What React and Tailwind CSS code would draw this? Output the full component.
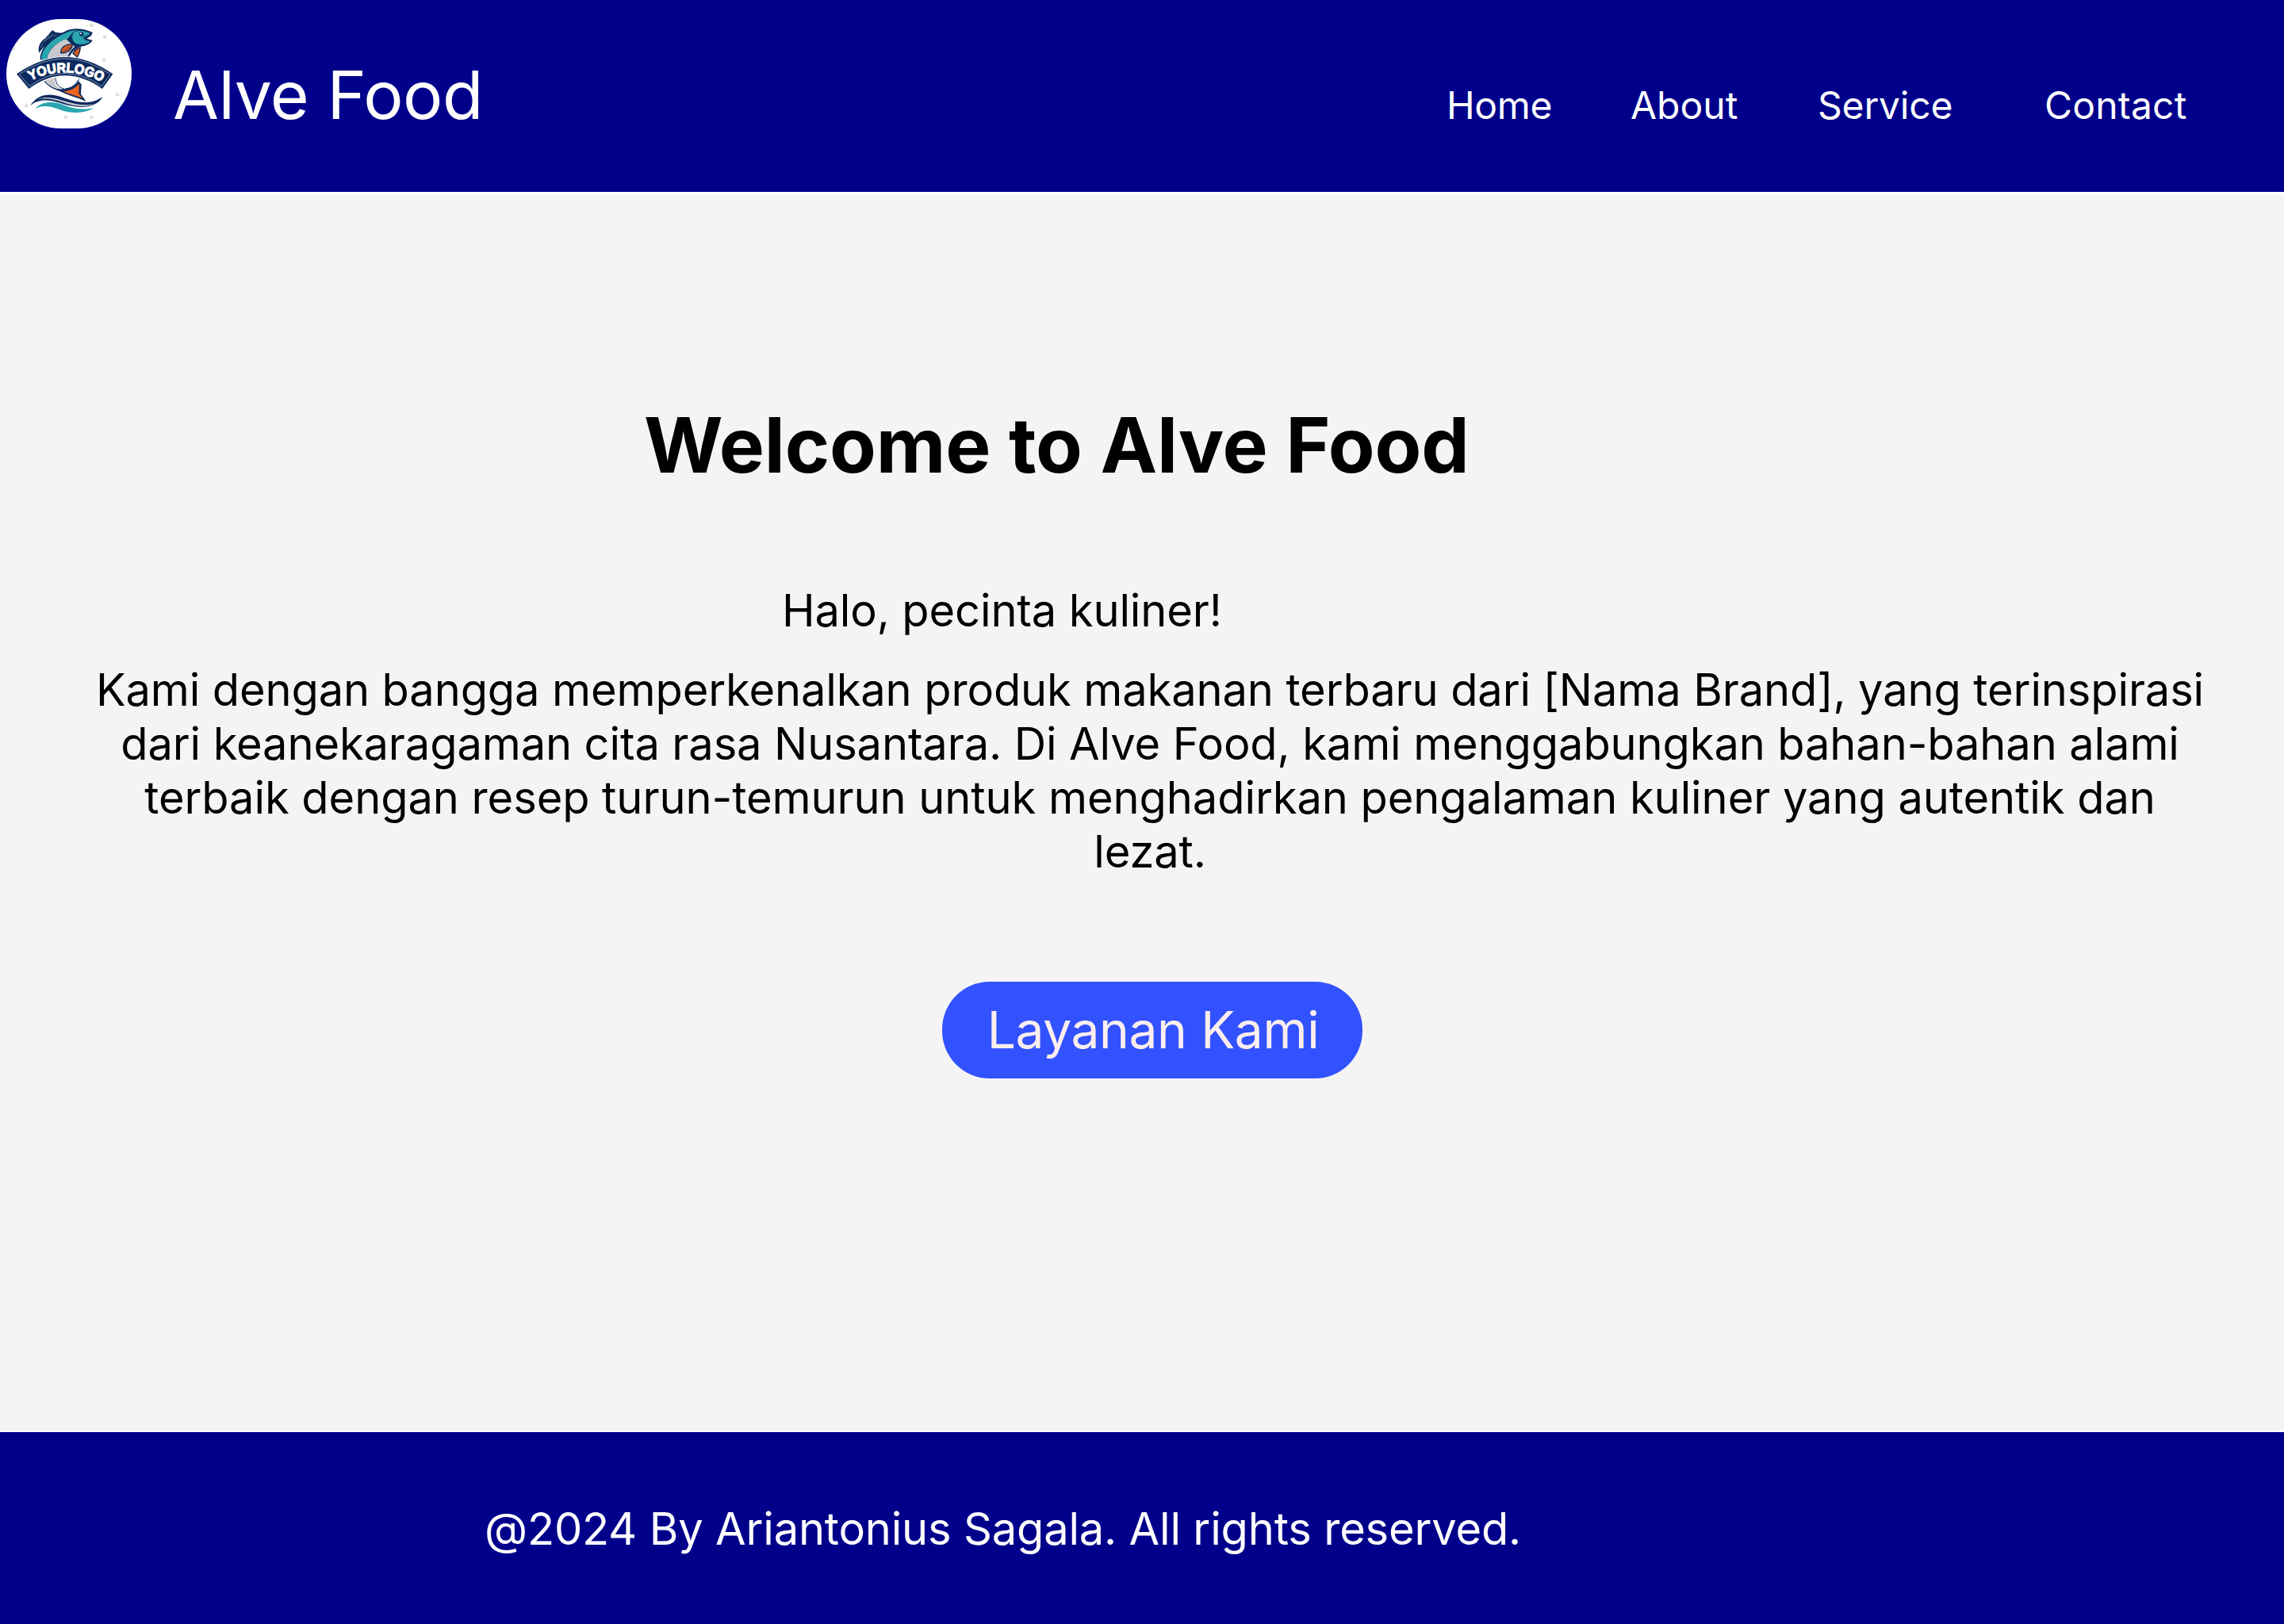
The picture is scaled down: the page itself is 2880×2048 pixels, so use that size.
function Logo() {
  return (
    <svg viewBox="24 42 474 414" className="mt-6 ml-2 h-[138px] w-[158px] shrink-0 rounded-[69px] bg-white">
      <g fill="#dedede">
        <path d="M340 60h12v12h-12zM390 104h12v12h-12zM388 191h12v12h-12zM438 322h12v12h-12zM243 407h12v12h-12zM340 407h12v12h-12zM94 364h12v12h-12zM46 150h10v12h-10z" />
      </g>
      <path d="M148 170C142 150 150 128 172 114L198 84L210 92L240 96L222 112C190 126 164 146 148 170Z" fill="#0b2a5e" />
      <path d="M154 152C160 130 180 112 214 101M166 126l8-12M180 116l6-14M194 108l4-12" fill="none" stroke="#5d6f93" strokeWidth="3" />
      <path d="M152 196C150 150 196 108 244 90C268 76 306 74 350 92L346 104L328 116L350 122C344 134 330 142 306 146C282 152 262 176 258 200Z" fill="#0b2a5e" />
      <path d="M156 194C156 154 200 114 248 95C272 81 308 80 344 95L338 103L316 114L324 126C316 136 290 140 276 126C268 112 270 100 278 90C262 104 262 118 244 122C204 134 182 160 178 196Z" fill="#2aa5b0" />
      <path d="M178 196C182 158 212 132 250 118C262 128 270 138 284 146C266 160 256 178 254 196Z" fill="#c9c9cd" />
      <path d="M276 94C268 112 272 130 292 138C314 142 334 136 344 126L322 120L314 110L340 100L342 95C314 82 288 82 276 94Z" fill="#2aa5b0" stroke="#0b2a5e" strokeWidth="3" />
      <circle cx="308" cy="99" r="8" fill="#0b2a5e" />
      <circle cx="306" cy="97" r="3" fill="#fff" />
      <path d="M230 168C232 146 250 136 274 138C272 158 256 172 230 170Z" fill="#d95b1a" stroke="#0b2a5e" strokeWidth="4" />
      <path d="M238 165L266 143M244 168L270 148" stroke="#0b2a5e" strokeWidth="1.5" />
      <path d="M276 172C284 158 294 152 304 150C302 164 300 176 292 186Z" fill="#d95b1a" stroke="#0b2a5e" strokeWidth="4" />
      <path d="M160 264C172 294 204 312 244 318L292 292L304 262L290 250H190Z" fill="#0b2a5e" />
      <path d="M166 268C178 292 204 306 236 310C262 308 286 296 300 270L280 255H180Z" fill="#fff" />
      <path d="M168 268C178 292 204 306 234 308C212 298 202 284 208 258H180Z" fill="#c9c9cd" />
      <path d="M210 262C210 286 220 300 242 306M296 272C286 292 268 304 246 306" fill="none" stroke="#0b2a5e" strokeWidth="3" />
      <path d="M214 308C252 308 280 300 300 278L308 290L306 326L326 354C294 338 256 332 214 308Z" fill="#0b2a5e" />
      <path d="M240 316C266 314 286 304 300 286L298 324L312 342C288 332 264 328 240 316Z" fill="#e8631b" />
      <path d="M58 250Q245 118 432 250L389 312Q245 208 108 312Z" fill="#fff" />
      <path d="M63 250Q245 122 427 250L387 306Q245 206 109 306Z" fill="#0b2a5e" />
      <path d="M73 251Q245 132 417 251L385 296Q245 200 111 296Z" fill="none" stroke="#b9c0cf" strokeWidth="2" />
      <path id="logo-arc" d="M116 275Q245 209 388 281" fill="none" />
      <text fill="#fff" stroke="#fff" strokeWidth="3.5" fontSize="51" fontWeight="700" fontFamily="Liberation Sans, sans-serif">
        <textPath href="#logo-arc" textLength="280" lengthAdjust="spacingAndGlyphs">YOURLOGO</textPath>
      </text>
      <path d="M114 370C140 328 184 320 230 336C290 358 340 370 388 336C366 380 300 382 240 364C184 344 144 344 114 370Z" fill="#0b2a5e" />
      <path d="M142 345C180 332 212 342 250 354C296 368 336 372 364 360C330 378 286 374 240 358C200 344 172 340 142 345Z" fill="#c9c9cd" />
      <path d="M132 382C160 350 206 352 244 368C286 384 320 386 356 378C320 400 272 400 230 386C190 370 160 366 132 382Z" fill="#2aa5b0" />
    </svg>
  );
}

export default function App() {
  return (
    <div className="flex h-[2048px] w-[2880px] flex-col overflow-hidden bg-[#f4f4f4] font-['Inter',sans-serif] text-black">
      <header className="flex h-[242px] shrink-0 bg-[#00008b] text-white">
        <Logo />
        <h1 className="mt-[69px] ml-[52px] w-[400px] text-[84px] leading-[102px] tracking-[-0.5px] whitespace-nowrap">Alve Food</h1>
        <nav className="mt-[104px] ml-[1206px] flex text-[48px] leading-[58px]">
          <a className="w-[232px] tracking-[-0.3px]">Home</a>
          <a className="w-[236px]">About</a>
          <a className="w-[286px] tracking-[-0.2px]">Service</a>
          <a className="tracking-[0.2px]">Contact</a>
        </nav>
      </header>
      <main className="flex h-[1564px] shrink-0 flex-col border-t-4 border-b-2 border-white">
        <h2 className="mt-[257px] ml-[812px] text-[96px] leading-[116px] font-bold tracking-[-0.12px]">Welcome to Alve Food</h2>
        <p className="mt-[117px] ml-[986px] text-[56px] leading-[68px] tracking-[-0.12px]">Halo, pecinta kuliner!</p>
        <p className="mt-[32px] ml-[100px] w-[2700px] text-center text-[56px] leading-[68px] tracking-[-0.115px]">
          Kami dengan bangga memperkenalkan produk makanan terbaru dari [Nama Brand], yang terinspirasi<br />
          dari keanekaragaman cita rasa Nusantara. Di Alve Food, kami menggabungkan bahan-bahan alami<br />
          <span className="tracking-[-0.07px]">terbaik dengan resep turun-temurun untuk menghadirkan pengalaman kuliner yang autentik dan</span><br />
          lezat.
        </p>
        <button className="mt-[130px] ml-[1188px] h-[122px] w-[530px] rounded-[60px] bg-[#3352ff] pl-[2px] text-[64px] tracking-[-0.35px] text-[#fceeee]">Layanan Kami</button>
      </main>
      <footer className="flex h-[242px] shrink-0 bg-[#00008b] text-white">
        <p className="mt-[88px] ml-[611px] text-[56px] leading-[68px] tracking-[-0.18px]">@2024 By Ariantonius Sagala. All rights reserved.</p>
      </footer>
    </div>
  );
}
